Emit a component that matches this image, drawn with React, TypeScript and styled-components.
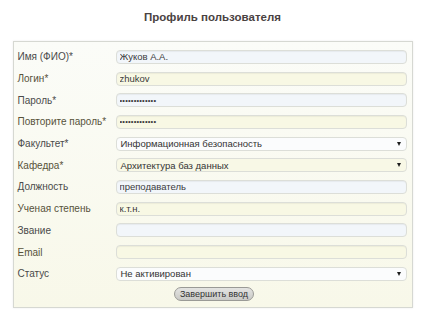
import styled, { createGlobalStyle } from 'styled-components'

const GlobalStyle = createGlobalStyle`
    html, body {
        margin: 0;
        padding: 0;
        background: #ffffff;
        font-family: "Liberation Sans", Arial, sans-serif;
    }
`

const Page = styled.div`
    width: 425px;
    height: 320px;
    box-sizing: border-box;
    padding-top: 10px;
    display: flex;
    flex-direction: column;
    align-items: center;
`

const Title = styled.h1`
    margin: 0 0 17px 0;
    font-size: 11.5px;
    line-height: 14px;
    font-weight: bold;
    color: #4a4242;
`

const Panel = styled.form`
    width: 400px;
    box-sizing: border-box;
    border: 1px solid #d6d8d2;
    background: linear-gradient(#fbfcf8, #f8f8e9);
    box-shadow: 0 0 2px rgba(0, 0, 0, 0.08);
    padding: 4px 5px 6px 4px;
    display: flex;
    flex-direction: column;
`

const Row = styled.div`
    display: grid;
    grid-template-columns: 98px 1fr;
    align-items: center;
    height: 21.7px;
`

const Label = styled.label<{ $tone: 'gray' | 'olive' }>`
    font-size: 10px;
    color: ${p => (p.$tone === 'olive' ? '#57523a' : '#4a4a4a')};
    white-space: nowrap;
`

const Field = styled.input<{ $tint: 'blue' | 'yellow' }>`
    height: 14px;
    box-sizing: border-box;
    width: 100%;
    margin: 0;
    padding: 0 3px;
    border: 1px solid #dcded8;
    border-radius: 4px;
    background: ${p => (p.$tint === 'blue' ? '#f2f6fa' : '#f8f8e4')};
    box-shadow: inset 0 1px 1px rgba(0, 0, 0, 0.05);
    font-family: "Liberation Sans", Arial, sans-serif;
    font-size: 9.5px;
    color: #3a3a3a;
    outline: none;
    &[type='password'] {
        font-size: 7.5px;
        letter-spacing: 0.2px;
    }
`

const SelectBox = styled.div<{ $tint: 'white' | 'yellow' }>`
    height: 14px;
    box-sizing: border-box;
    display: flex;
    align-items: center;
    justify-content: space-between;
    padding: 0 5px 0 4px;
    border: 1px solid #dcded8;
    border-radius: 4px;
    background: ${p => (p.$tint === 'white' ? '#fbfcfd' : '#f8f8e6')};
    font-size: 9.5px;
    color: #333333;
`

const Arrow = styled.span`
    width: 0;
    height: 0;
    border-left: 2.5px solid transparent;
    border-right: 2.5px solid transparent;
    border-top: 4px solid #1e1e1e;
`

const Actions = styled.div`
    display: flex;
    justify-content: center;
    padding-top: 2px;
    padding-left: 4px;
`

const Submit = styled.button`
    height: 14px;
    padding: 0 5px;
    border: 1px solid #9a9a96;
    border-radius: 7px;
    background: linear-gradient(#e4e4e2, #c9c9c6);
    font-family: "Liberation Sans", Arial, sans-serif;
    font-size: 9px;
    color: #333333;
    line-height: 12px;
`

type Item =
    | { label: string; kind: 'text' | 'password'; value: string; tint: 'blue' | 'yellow' }
    | { label: string; kind: 'select'; value: string; tint: 'white' | 'yellow' }

const items: Item[] = [
    { label: 'Имя (ФИО)*', kind: 'text', value: 'Жуков А.А.', tint: 'blue' },
    { label: 'Логин*', kind: 'text', value: 'zhukov', tint: 'yellow' },
    { label: 'Пароль*', kind: 'password', value: '1234567890123', tint: 'blue' },
    { label: 'Повторите пароль*', kind: 'password', value: '1234567890123', tint: 'yellow' },
    { label: 'Факультет*', kind: 'select', value: 'Информационная безопасность', tint: 'white' },
    { label: 'Кафедра*', kind: 'select', value: 'Архитектура баз данных', tint: 'yellow' },
    { label: 'Должность', kind: 'text', value: 'преподаватель', tint: 'blue' },
    { label: 'Ученая степень', kind: 'text', value: 'к.т.н.', tint: 'yellow' },
    { label: 'Звание', kind: 'text', value: '', tint: 'blue' },
    { label: 'Email', kind: 'text', value: '', tint: 'yellow' },
    { label: 'Статус', kind: 'select', value: 'Не активирован', tint: 'white' },
]

const App = () => {
    return (
        <Page>
            <GlobalStyle />
            <Title>Профиль пользователя</Title>
            <Panel onSubmit={e => e.preventDefault()}>
                {items.map((item, i) => (
                    <Row key={item.label}>
                        <Label $tone={i % 2 === 1 ? 'olive' : 'gray'}>{item.label}</Label>
                        {item.kind === 'select' ? (
                            <SelectBox $tint={item.tint}>
                                <span>{item.value}</span>
                                <Arrow />
                            </SelectBox>
                        ) : (
                            <Field
                                $tint={item.tint}
                                type={item.kind}
                                value={item.value}
                                readOnly
                            />
                        )}
                    </Row>
                ))}
                <Actions>
                    <Submit type="submit">Завершить ввод</Submit>
                </Actions>
            </Panel>
        </Page>
    )
}

export default App
